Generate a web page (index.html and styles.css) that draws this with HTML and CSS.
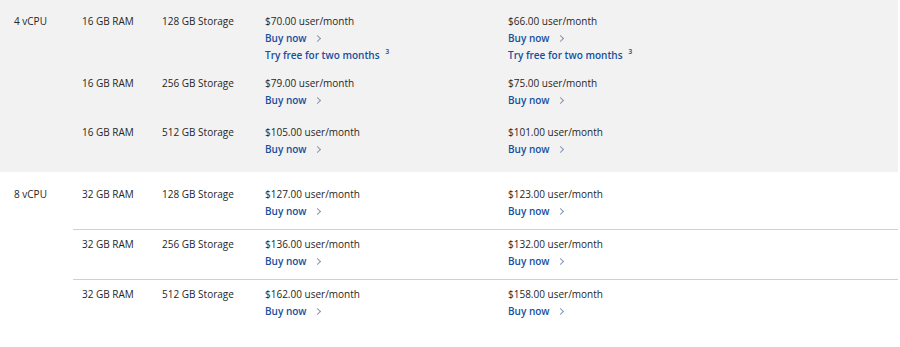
FILE: index.html
```html
<!DOCTYPE html>
<html lang="en">
<head>
    <meta charset="UTF-8">
    <meta name="viewport" content="width=device-width, initial-scale=1.0">
    <title>Cloud PC pricing</title>
    <link rel="stylesheet" href="styles.css">
</head>
<body>

<!-- 4 vCPU group -->
<div class="cpu-group shaded">
    <div class="cpu-name">4 vCPU</div>
    <div class="cpu-rows">
        <div class="plan-row">
            <div class="ram">16 GB RAM</div>
            <div class="storage">128 GB Storage</div>
            <div class="offer">
                <div class="price">$70.00 user/month</div>
                <a class="link" href="#">Buy now <span class="chev"></span></a>
                <a class="link trial" href="#">Try free for two months <sup>3</sup></a>
            </div>
            <div class="offer">
                <div class="price">$66.00 user/month</div>
                <a class="link" href="#">Buy now <span class="chev"></span></a>
                <a class="link trial" href="#">Try free for two months <sup>3</sup></a>
            </div>
        </div>
        <div class="plan-row">
            <div class="ram">16 GB RAM</div>
            <div class="storage">256 GB Storage</div>
            <div class="offer">
                <div class="price">$79.00 user/month</div>
                <a class="link" href="#">Buy now <span class="chev"></span></a>
            </div>
            <div class="offer">
                <div class="price">$75.00 user/month</div>
                <a class="link" href="#">Buy now <span class="chev"></span></a>
            </div>
        </div>
        <div class="plan-row">
            <div class="ram">16 GB RAM</div>
            <div class="storage">512 GB Storage</div>
            <div class="offer">
                <div class="price">$105.00 user/month</div>
                <a class="link" href="#">Buy now <span class="chev"></span></a>
            </div>
            <div class="offer">
                <div class="price">$101.00 user/month</div>
                <a class="link" href="#">Buy now <span class="chev"></span></a>
            </div>
        </div>
    </div>
</div>

<!-- 8 vCPU group -->
<div class="cpu-group lined">
    <div class="cpu-name">8 vCPU</div>
    <div class="cpu-rows">
        <div class="plan-row">
            <div class="ram">32 GB RAM</div>
            <div class="storage">128 GB Storage</div>
            <div class="offer">
                <div class="price">$127.00 user/month</div>
                <a class="link" href="#">Buy now <span class="chev"></span></a>
            </div>
            <div class="offer">
                <div class="price">$123.00 user/month</div>
                <a class="link" href="#">Buy now <span class="chev"></span></a>
            </div>
        </div>
        <div class="plan-row">
            <div class="ram">32 GB RAM</div>
            <div class="storage">256 GB Storage</div>
            <div class="offer">
                <div class="price">$136.00 user/month</div>
                <a class="link" href="#">Buy now <span class="chev"></span></a>
            </div>
            <div class="offer">
                <div class="price">$132.00 user/month</div>
                <a class="link" href="#">Buy now <span class="chev"></span></a>
            </div>
        </div>
        <div class="plan-row">
            <div class="ram">32 GB RAM</div>
            <div class="storage">512 GB Storage</div>
            <div class="offer">
                <div class="price">$162.00 user/month</div>
                <a class="link" href="#">Buy now <span class="chev"></span></a>
            </div>
            <div class="offer">
                <div class="price">$158.00 user/month</div>
                <a class="link" href="#">Buy now <span class="chev"></span></a>
            </div>
        </div>
    </div>
</div>

</body>
</html>
```

FILE: styles.css
```css
* {
    margin: 0;
    padding: 0;
    box-sizing: border-box;
}

body {
    width: 898px;
    font-family: "Open Sans", sans-serif;
    font-size: 10px;
    line-height: 17px;
    color: #262626;
    background: #fff;
}

/* One block per vCPU size */
.cpu-group {
    display: flex;
}

.shaded {
    background-color: #f2f2f2;
    padding-top: 13px;
}

.lined {
    padding-top: 8px;
}

.cpu-name {
    width: 73px;
    padding-left: 14px;
}

.lined .cpu-name {
    padding-top: 6px;
}

.cpu-rows {
    flex: 1;
}

/* Single configuration row */
.plan-row {
    display: grid;
    grid-template-columns: 80px 103px 243px 1fr;
    padding: 0 0 15px 9px;
}

.shaded .plan-row:last-child {
    padding-bottom: 14px;
}

.lined .plan-row {
    padding: 6px 0 9px 9px;
}

.lined .plan-row + .plan-row {
    border-top: 1px solid #d0d0d0;
}

.offer {
    display: flex;
    flex-direction: column;
    align-items: flex-start;
}

.link {
    color: #164f9e;
    font-weight: 600;
    text-decoration: none;
}

.trial {
    margin-bottom: -4px;
}

.link sup {
    font-size: 7px;
    margin-left: 3px;
    vertical-align: 5px;
    line-height: 0;
}

/* Small right chevron after links */
.chev {
    display: inline-block;
    width: 5px;
    height: 5px;
    margin-left: 6px;
    border-top: 1px solid #8797b0;
    border-right: 1px solid #8797b0;
    transform: rotate(45deg);
    vertical-align: 1px;
}
```
